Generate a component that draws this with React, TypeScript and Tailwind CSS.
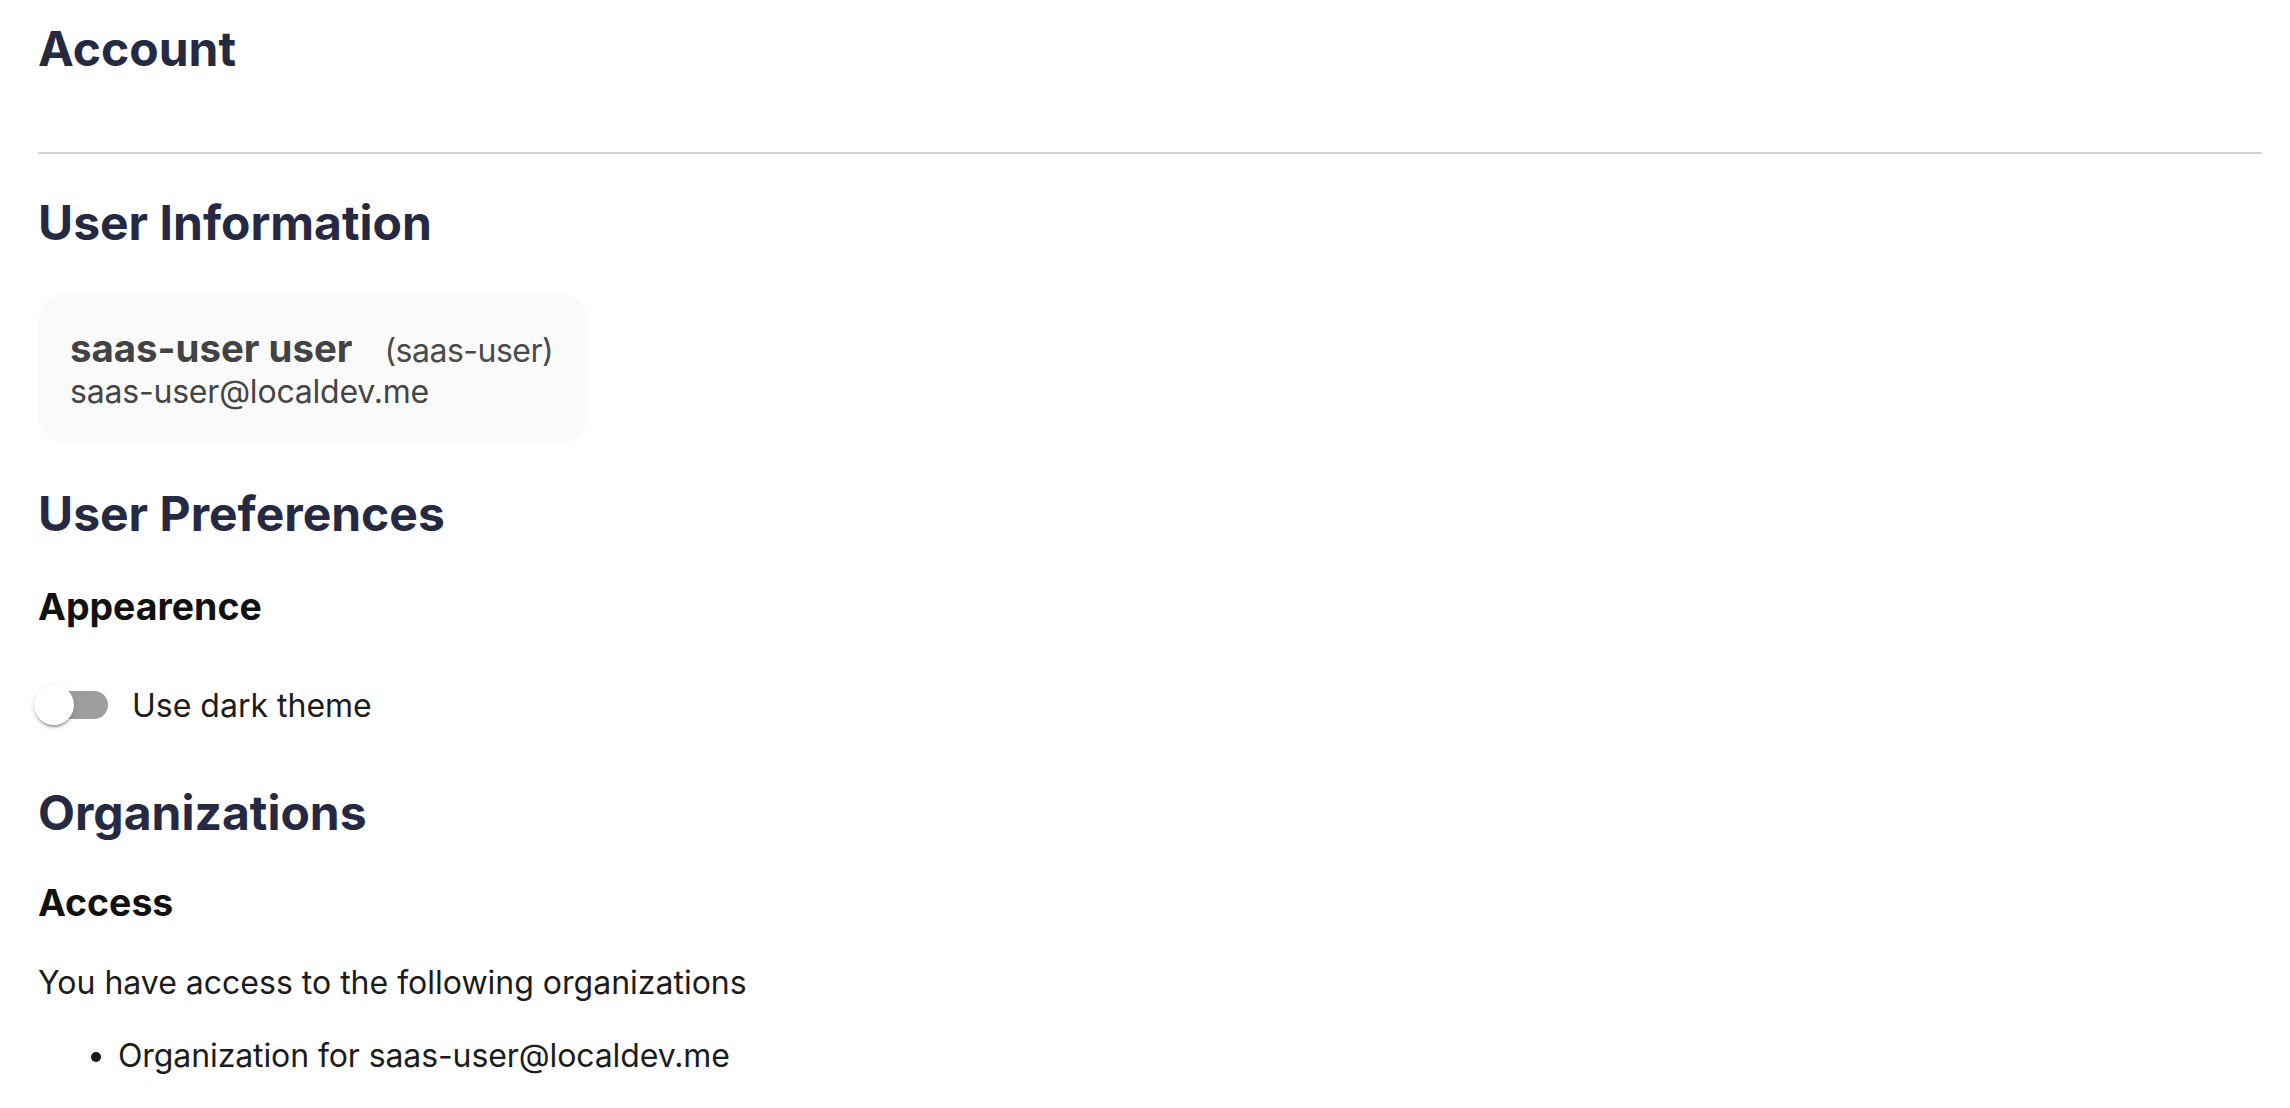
import React from "react";

const font = { fontFamily: "Inter, 'Noto Sans', sans-serif" };

function Switch() {
  // switch drawn off, thumb on the left
  return (
    <span className="relative block h-[76px] w-[116px] shrink-0">
      <span className="absolute left-[24px] top-[24px] h-[28px] w-[68px] rounded-full bg-[#9e9e9e]" />
      <span className="absolute left-[18px] top-[18px] h-10 w-10 rounded-full bg-white shadow-[0_4px_2px_-2px_rgba(0,0,0,0.2),0_2px_2px_0_rgba(0,0,0,0.14),0_2px_6px_0_rgba(0,0,0,0.12)]" />
    </span>
  );
}

export default function App() {
  return (
    <div className="min-h-screen bg-white pl-[38px] pr-[28px] text-[#1c1c1c]" style={font}>
      <h1 className="pt-[20px] text-[48px] font-bold leading-[58px] text-[#252a42]">Account</h1>
      <div className="mt-[74px] h-[2px] bg-[#d4d4d4]" />

      <h2 className="mt-[40px] text-[48px] font-bold leading-[58px] text-[#252a42]">User Information</h2>
      <div className="mt-[41px] w-fit whitespace-nowrap rounded-[30px] bg-[#fafafa] pl-[32px] pr-[35px] pt-[32px] pb-[31px]">
        <div className="flex h-[46px] items-baseline">
          <span className="text-[38.4px] font-bold leading-[46px] text-[#434343]">saas-user user</span>
          <span className="ml-[32px] text-[32px] leading-[38px] tracking-[-0.5px] text-[#4a4a4a]">(saas-user)</span>
        </div>
        <div className="text-[32px] leading-[42px] tracking-[-0.2px] text-[#454545]">saas-user@localdev.me</div>
      </div>

      <h2 className="mt-[41px] text-[48px] font-bold leading-[58px] text-[#252a42]">User Preferences</h2>
      <h3 className="mt-[41px] text-[37.44px] font-bold leading-[45px] text-[#121212]">Appearence</h3>
      <label className="-ml-[22px] mt-[38px] flex h-[76px] cursor-pointer items-center">
        <Switch />
        <span className="text-[32px] leading-[39px]">Use dark theme</span>
      </label>

      <h2 className="mt-[41px] text-[48px] font-bold leading-[58px] text-[#252a42]">Organizations</h2>
      <h3 className="mt-[38px] text-[37.44px] font-bold leading-[45px] text-[#121212]">Access</h3>
      <p className="mt-[38px] text-[32px] leading-[39px]">You have access to the following organizations</p>
      <ul className="mt-[34px] list-disc pl-[80px] text-[32px] leading-[39px] tracking-[-0.1px]">
        <li>Organization for saas-user@localdev.me</li>
      </ul>
    </div>
  );
}
